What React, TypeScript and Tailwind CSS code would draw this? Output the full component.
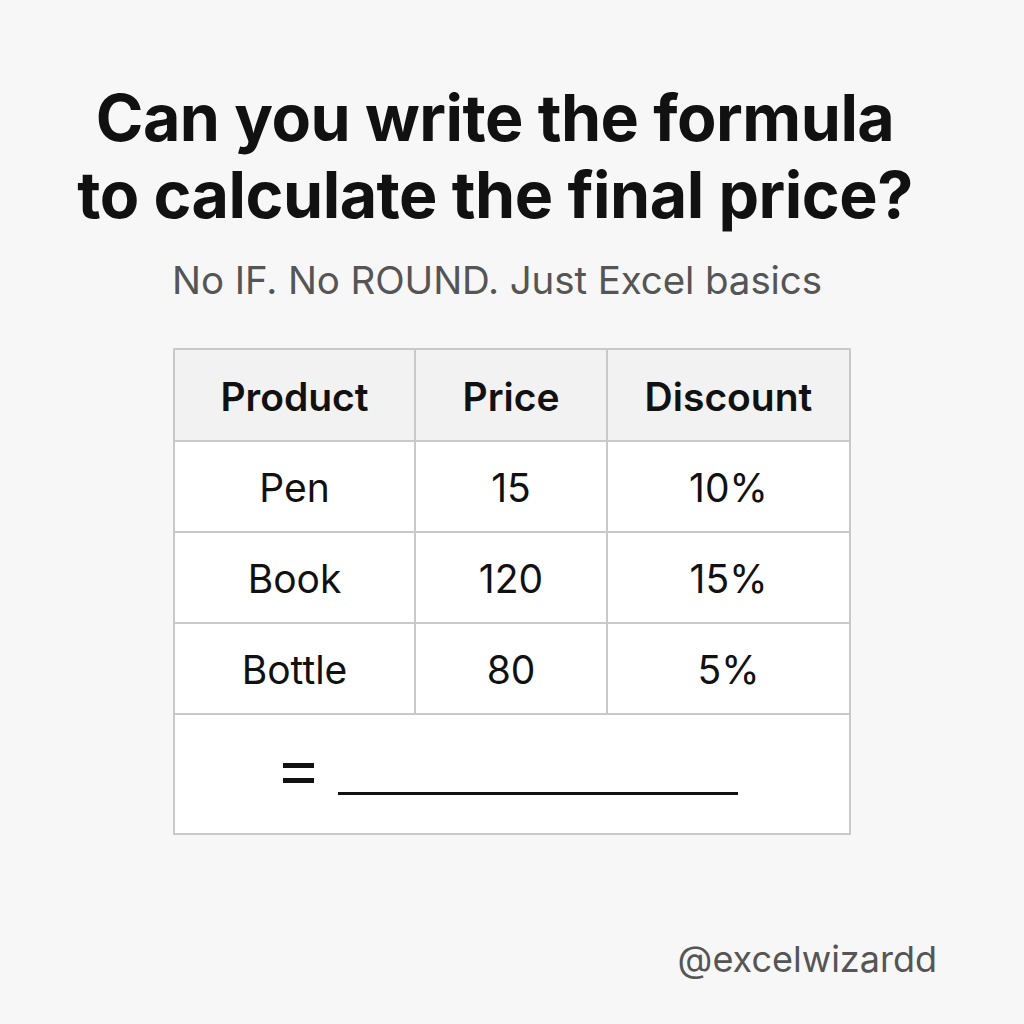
const rows = [
  { product: "Pen", price: "15", discount: "10%" },
  { product: "Book", price: "120", discount: "15%" },
  { product: "Bottle", price: "80", discount: "5%" },
];

export default function App() {
  return (
    <div
      className="w-[1024px] h-[1024px] bg-[#f7f7f7] flex flex-col items-center relative"
      style={{ fontFamily: "Inter, 'Liberation Sans', sans-serif" }}
    >
      <h1 className="mt-[80px] pr-[34px] text-center text-[64.5px] leading-[77px] font-bold text-[#111] tracking-[-0.5px]">
        Can you write the formula
        <br />
        to calculate the final price?
      </h1>
      <p className="mt-[24px] pr-[30px] text-[38.5px] leading-[44px] text-[#555] tracking-[-0.1px]">
        No IF. No ROUND. Just Excel basics
      </p>

      <div className="mt-[46px] w-[678px] border-2 border-[#c9c9c9] bg-white">
        <div className="grid grid-cols-[241px_192px_1fr] h-[92px] bg-[#f2f2f2] border-b-2 border-[#c9c9c9] text-[39px] font-semibold text-[#111]">
          <div className="flex items-center justify-center border-r-2 border-[#c9c9c9] pt-[4px]">Product</div>
          <div className="flex items-center justify-center border-r-2 border-[#c9c9c9] pt-[4px]">Price</div>
          <div className="flex items-center justify-center pt-[4px]">Discount</div>
        </div>
        {rows.map((r) => (
          <div
            key={r.product}
            className="grid grid-cols-[241px_192px_1fr] h-[91px] border-b-2 border-[#c9c9c9] text-[39px] text-[#111]"
          >
            <div className="flex items-center justify-center border-r-2 border-[#c9c9c9] pt-[4px]">{r.product}</div>
            <div className="flex items-center justify-center border-r-2 border-[#c9c9c9] pt-[4px]">{r.price}</div>
            <div className="flex items-center justify-center pt-[4px]">{r.discount}</div>
          </div>
        ))}
        <div className="h-[118px] flex items-center pl-[108px] gap-[24px]">
          <div className="flex flex-col gap-[10px] -mt-[2px]">
            <div className="w-[31px] h-[5px] bg-[#111]" />
            <div className="w-[31px] h-[5px] bg-[#111]" />
          </div>
          <div className="w-[400px] h-[3px] bg-[#111] mt-[38px]" />
        </div>
      </div>

      <div className="absolute right-[87px] bottom-[38px] text-[36px] text-[#555]">@excelwizardd</div>
    </div>
  );
}
